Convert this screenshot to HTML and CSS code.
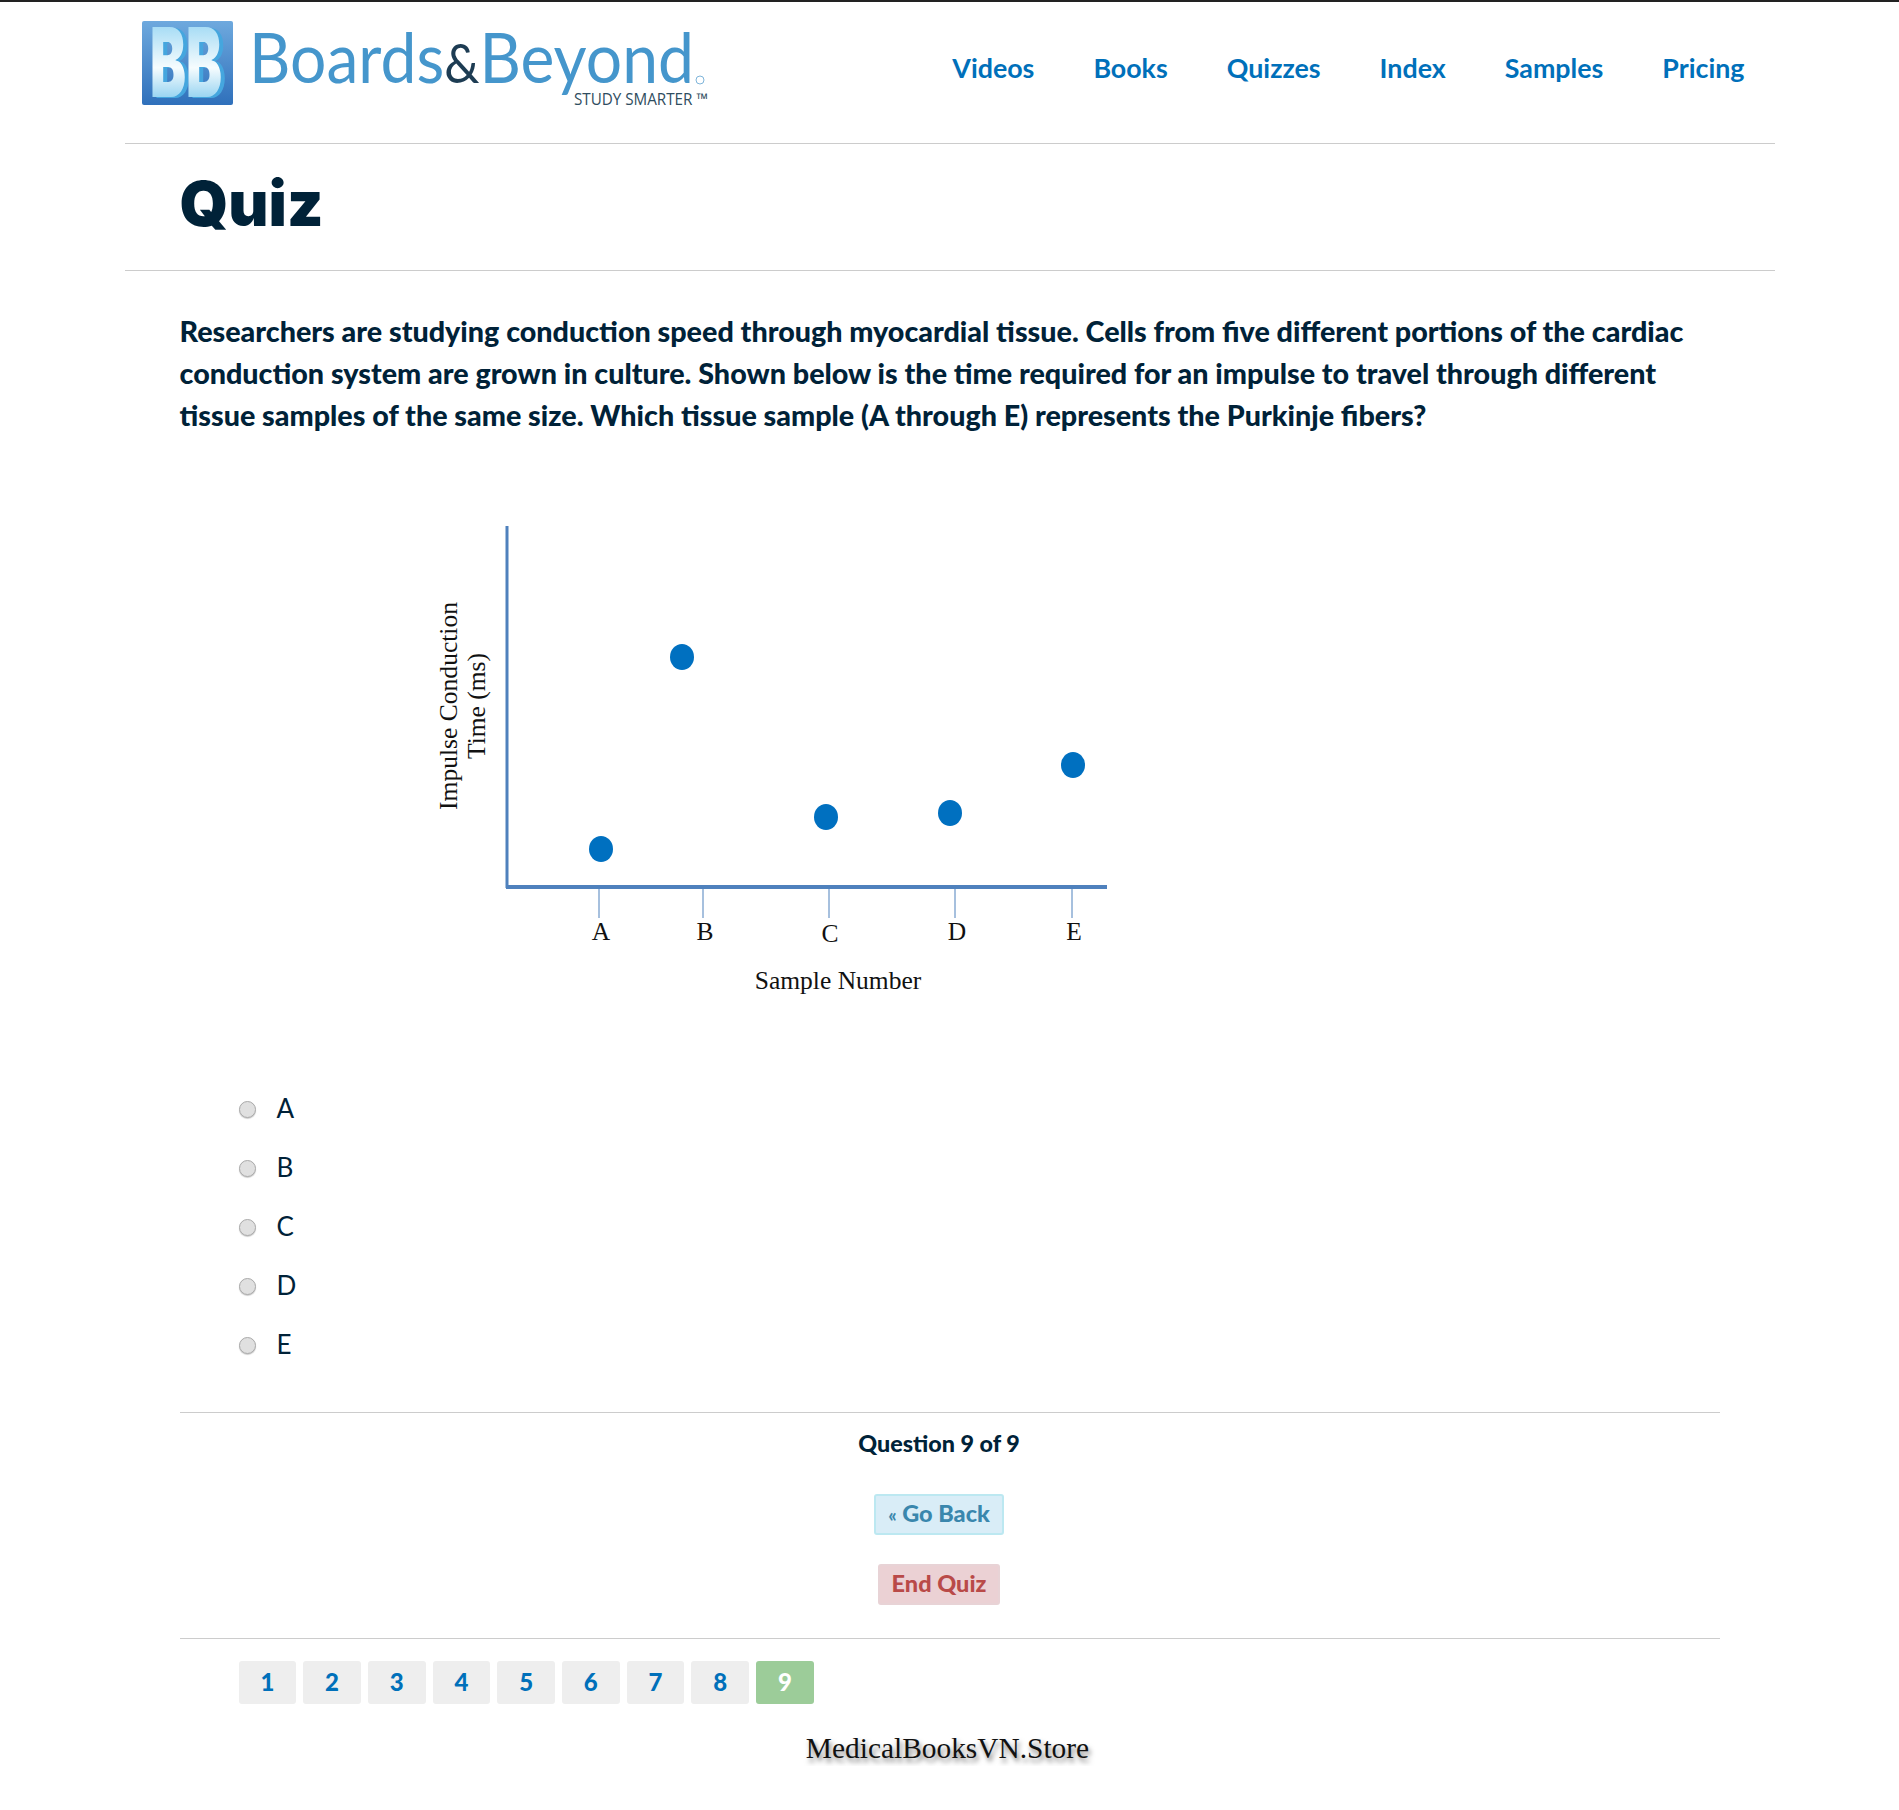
FILE: index.html
```html
<!DOCTYPE html>
<html lang="en">

<head>
    <meta charset="utf-8">
    <title>Quiz</title>
    <link rel="stylesheet" href="styles.css">
</head>

<body>
    <div class="wrap">
        <header class="site-header">
            <!-- Logo -->
            <svg class="logo" width="570" height="100" viewBox="0 0 570 100">
                <defs>
                    <linearGradient id="tile" x1="0" y1="0" x2="0" y2="1">
                        <stop offset="0" stop-color="#6ea9de"/>
                        <stop offset="1" stop-color="#2f70bb"/>
                    </linearGradient>
                    <linearGradient id="shine" x1="0" y1="0" x2="0" y2="1">
                        <stop offset="0" stop-color="#7ccbf0"/>
                        <stop offset="0.55" stop-color="#f6fcfe"/>
                        <stop offset="1" stop-color="#52b6e8"/>
                    </linearGradient>
                </defs>
                <rect x="0" y="0" width="91" height="84" rx="2" fill="url(#tile)"/>
                <text class="logo-bb" x="8" y="76" textLength="72" lengthAdjust="spacingAndGlyphs" fill="url(#shine)">BB</text>
                <text class="logo-word" x="107" y="62" textLength="445" lengthAdjust="spacingAndGlyphs">Boards<tspan class="logo-amp">&amp;</tspan>Beyond</text>
                <circle cx="558" cy="59" r="4" fill="none" stroke="#7fb5da" stroke-width="1"/>
                <text class="logo-tag" x="432" y="84" textLength="134" lengthAdjust="spacingAndGlyphs">STUDY SMARTER ™</text>
            </svg>
            <nav class="main-nav">
                <a href="#">Videos</a>
                <a href="#">Books</a>
                <a href="#">Quizzes</a>
                <a href="#">Index</a>
                <a href="#">Samples</a>
                <a href="#">Pricing</a>
            </nav>
        </header>

        <div class="title-bar">
            <h1>Quiz</h1>
        </div>

        <main class="quiz">
            <p class="question">Researchers are studying conduction speed through myocardial tissue. Cells from five different portions of the cardiac conduction system are grown in culture. Shown below is the time required for an impulse to travel through different tissue samples of the same size. Which tissue sample (A through E) represents the Purkinje fibers?</p>

            <!-- Chart, coordinates are relative to the picture -->
            <svg class="chart" width="720" height="520" viewBox="0 0 720 520">
                <line x1="87" y1="26" x2="87" y2="388" stroke="#4f81bd" stroke-width="3"/>
                <line x1="86" y1="387" x2="687" y2="387" stroke="#4f81bd" stroke-width="4"/>

                <line class="tick" x1="179" y1="389" x2="179" y2="418"/>
                <line class="tick" x1="283" y1="389" x2="283" y2="418"/>
                <line class="tick" x1="409" y1="389" x2="409" y2="418"/>
                <line class="tick" x1="535" y1="389" x2="535" y2="418"/>
                <line class="tick" x1="652" y1="389" x2="652" y2="418"/>

                <ellipse class="dot" cx="181" cy="349" rx="12" ry="13"/>
                <ellipse class="dot" cx="262" cy="157" rx="12" ry="13"/>
                <ellipse class="dot" cx="406" cy="317" rx="12" ry="13"/>
                <ellipse class="dot" cx="530" cy="313" rx="12" ry="13"/>
                <ellipse class="dot" cx="653" cy="265" rx="12" ry="13"/>

                <text class="chart-label" x="181" y="440">A</text>
                <text class="chart-label" x="285" y="440">B</text>
                <text class="chart-label" x="410" y="442">C</text>
                <text class="chart-label" x="537" y="440">D</text>
                <text class="chart-label" x="654" y="440">E</text>
                <text class="chart-label" x="418" y="489">Sample Number</text>

                <text class="chart-label" transform="translate(37 206) rotate(-90)" textLength="208" lengthAdjust="spacingAndGlyphs">Impulse Conduction</text>
                <text class="chart-label" transform="translate(65 206) rotate(-90)">Time (ms)</text>
            </svg>

            <div class="answers">
                <label class="answer"><input type="radio" name="answer"><span>A</span></label>
                <label class="answer"><input type="radio" name="answer"><span>B</span></label>
                <label class="answer"><input type="radio" name="answer"><span>C</span></label>
                <label class="answer"><input type="radio" name="answer"><span>D</span></label>
                <label class="answer"><input type="radio" name="answer"><span>E</span></label>
            </div>

            <div class="quiz-controls">
                <p class="progress">Question 9 of 9</p>
                <a class="btn btn-back" href="#"><small>«</small> Go Back</a>
                <a class="btn btn-end" href="#">End Quiz</a>
            </div>

            <div class="pager">
                <a href="#">1</a>
                <a href="#">2</a>
                <a href="#">3</a>
                <a href="#">4</a>
                <a href="#">5</a>
                <a href="#">6</a>
                <a href="#">7</a>
                <a href="#">8</a>
                <a class="current" href="#">9</a>
            </div>
        </main>

        <p class="watermark">MedicalBooksVN.Store</p>
    </div>
</body>

</html>
```

FILE: styles.css
```css
* {
    box-sizing: border-box;
}

body {
    margin: 0;
    background: #fff;
    border-top: 2px solid #222;
    color: #002238;
    font-family: 'Lato', 'Liberation Sans', sans-serif;
}

a {
    text-decoration: none;
}

.wrap {
    width: 1650px;
    margin: 0 auto;
}

/* Header */
.site-header {
    display: flex;
    justify-content: space-between;
    height: 142px;
    padding: 19px 30px 0 17px;
    border-bottom: 1px solid #ccc;
}

.logo {
    display: block;
}

.logo-bb {
    font-family: 'Inter', sans-serif;
    font-weight: 900;
    font-size: 96px;
    filter: drop-shadow(4px 1px 0 #45a6de);
}

.logo-word {
    font-family: 'Lato', sans-serif;
    font-size: 70px;
    fill: #4596cc;
}

.logo-amp {
    font-size: 54px;
    fill: #1d3c53;
}

.logo-tag {
    font-family: 'Open Sans', sans-serif;
    font-size: 16px;
    fill: #2f4d60;
}

.main-nav {
    display: flex;
    gap: 59px;
    padding-top: 30px;
}

.main-nav a {
    color: #0070ba;
    font-family: 'Lato', sans-serif;
    font-size: 26.8px;
    font-weight: 700;
    line-height: 34px;
}

/* Title */
.title-bar {
    height: 127px;
    padding: 25px 55px 0;
    border-bottom: 1px solid #ccc;
}

h1 {
    margin: 0;
    font-family: 'Inter', sans-serif;
    font-size: 62px;
    font-weight: 900;
    line-height: 70px;
}

/* Quiz body */
.quiz {
    padding: 0 55px;
}

.question {
    margin: 39px 0 0;
    font-size: 28.7px;
    font-weight: 900;
    line-height: 42px;
}

.chart {
    display: block;
    margin: 64px 0 0 240px;
}

.tick {
    stroke: #4f81bd;
    stroke-width: 1;
}

.dot {
    fill: #0070c0;
}

.chart-label {
    font-family: 'Liberation Serif', serif;
    font-size: 25.5px;
    fill: #111;
    text-anchor: middle;
}

.answers {
    margin: 60px 0 37px;
    padding-left: 59px;
}

.answer {
    display: flex;
    align-items: center;
    gap: 21px;
    height: 59px;
    font-size: 26px;
}

.answer span {
    margin-top: -4px;
}

.answer input {
    appearance: none;
    width: 17px;
    height: 17px;
    margin: 0;
    border: 1px solid #aaa;
    border-radius: 50%;
    background: #e0e0e0;
    box-shadow: 0 1px 1px rgba(0, 0, 0, 0.2);
}

/* Progress and buttons */
.quiz-controls {
    display: flex;
    flex-direction: column;
    align-items: center;
    height: 227px;
    padding-right: 21px;
    border-top: 1px solid #ccc;
    border-bottom: 1px solid #ccc;
}

.progress {
    margin: 15px 0 36px;
    font-size: 23.3px;
    font-weight: 900;
    line-height: 30px;
}

.btn {
    height: 41px;
    margin-bottom: 29px;
    padding: 0 12px;
    border: 2px solid;
    border-radius: 3px;
    font-size: 23.5px;
    font-weight: 900;
    line-height: 35px;
}

.btn small {
    font-size: 18px;
}

.btn-back {
    background: #d9edf7;
    border-color: #bce8f1;
    color: #3a87ad;
}

.btn-end {
    background: #ebd1d4;
    border-color: #e8d3d6;
    color: #b94a48;
}

/* Question numbers */
.pager {
    display: flex;
    gap: 7px;
    margin-top: 22px;
    padding-left: 59px;
}

.pager a {
    width: 57.7px;
    height: 43px;
    border-radius: 3px;
    background: #eee;
    color: #0070ba;
    font-size: 24px;
    font-weight: 900;
    line-height: 42px;
    text-align: center;
}

.pager a.current {
    background: #9ccc99;
    color: #fff;
}

.watermark {
    margin: 26px 0 0;
    padding-right: 4px;
    color: #111;
    font-family: 'Liberation Serif', serif;
    font-size: 29.4px;
    line-height: 36px;
    text-align: center;
    text-shadow: 2px 4px 5px rgba(0, 0, 0, 0.5);
}
```
